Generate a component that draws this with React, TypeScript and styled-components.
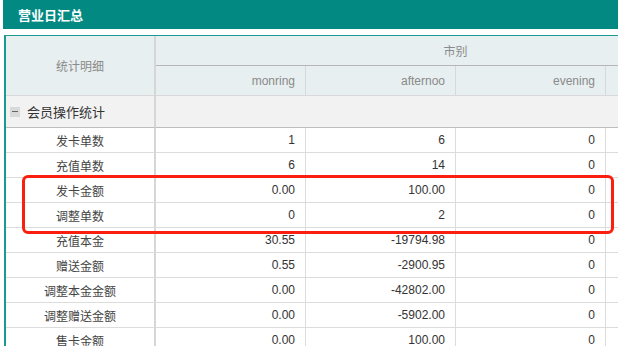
import React from "react";
import styled, { createGlobalStyle } from "styled-components";

const Global = createGlobalStyle`
  html, body { margin: 0; padding: 0; background: #fff; }
  body { font-family: "Liberation Sans", "Noto Sans CJK SC", sans-serif; overflow: hidden; }
`;

const Page = styled.div`
  position: relative;
  width: 618px;
  height: 346px;
  overflow: hidden;
  padding-left: 3px;
  box-sizing: border-box;
`;

const TitleBar = styled.div`
  height: 29px;
  background: #028a82;
  color: #fff;
  font-size: 13px;
  font-weight: bold;
  display: flex;
  align-items: center;
  padding-left: 15px;
`;

const TableWrap = styled.div`
  margin-top: 6px;
  margin-left: 1px;
  border-top: 1px solid #1a9a90;
  border-left: 2px solid #1a9a90;
  width: 760px;
`;

const Table = styled.table`
  border-collapse: separate;
  border-spacing: 0;
  table-layout: fixed;
  width: 750px;
  font-size: 12px;
`;

const HeadCell = styled.th<{ $align?: string; $h: number; $thick?: boolean; $dark?: boolean }>`
  background: #e7eff0;
  color: #8a8a8a;
  font-weight: normal;
  height: ${(p) => p.$h}px;
  padding: 0 10px;
  text-align: ${(p) => p.$align || "center"};
  border-right: ${(p) => (p.$thick ? "2px solid #d6d6d6" : "1px solid #d8d8d8")};
  border-bottom: 1px solid ${(p) => (p.$dark ? "#b5b5b5" : "#d8d8d8")};
  box-sizing: border-box;
`;

const GroupLabel = styled.td`
  background: #f2f2f2;
  height: 32px;
  padding: 0 0 0 4px;
  border-right: 2px solid #d6d6d6;
  border-bottom: 1px solid #bdbdbd;
  box-sizing: border-box;
  color: #333;
  font-size: 13px;
`;

const GroupFill = styled.td`
  background: #f2f2f2;
  border-bottom: 1px solid #bdbdbd;
`;

const GroupInner = styled.div`
  display: flex;
  align-items: center;
  gap: 7px;
`;

const Toggle = styled.span`
  width: 10px;
  height: 10px;
  background: #d9d9d9;
  display: inline-flex;
  align-items: center;
  justify-content: center;
  &::after {
    content: "";
    width: 6px;
    height: 1px;
    background: #666;
  }
`;

const LabelCell = styled.td`
  height: 25px;
  text-align: center;
  color: #444;
  border-right: 2px solid #d6d6d6;
  border-bottom: 1px solid #dcdcdc;
  box-sizing: border-box;
  padding: 0;
`;

const NumCell = styled.td`
  height: 25px;
  text-align: right;
  color: #333;
  padding: 0 10px;
  border-right: 1px solid #dcdcdc;
  border-bottom: 1px solid #dcdcdc;
  box-sizing: border-box;
`;

const Highlight = styled.div`
  position: absolute;
  left: 22px;
  top: 175px;
  width: 592px;
  height: 59px;
  border: 3px solid #fb1f10;
  border-radius: 6px;
  box-sizing: border-box;
  pointer-events: none;
`;

const rows: [string, string, string, string][] = [
  ["发卡单数", "1", "6", "0"],
  ["充值单数", "6", "14", "0"],
  ["发卡金额", "0.00", "100.00", "0"],
  ["调整单数", "0", "2", "0"],
  ["充值本金", "30.55", "-19794.98", "0"],
  ["赠送金额", "0.55", "-2900.95", "0"],
  ["调整本金金额", "0.00", "-42802.00", "0"],
  ["调整赠送金额", "0.00", "-5902.00", "0"],
  ["售卡金额", "0.00", "100.00", "0"],
];

export default function App() {
  return (
    <>
      <Global />
      <Page>
        <TitleBar>营业日汇总</TitleBar>
        <TableWrap>
          <Table>
            <colgroup>
              <col style={{ width: 150 }} />
              <col style={{ width: 150 }} />
              <col style={{ width: 150 }} />
              <col style={{ width: 150 }} />
              <col style={{ width: 150 }} />
            </colgroup>
            <thead>
              <tr>
                <HeadCell rowSpan={2} $h={60} $thick>
                  统计明细
                </HeadCell>
                <HeadCell colSpan={4} $h={30} $dark>
                  市别
                </HeadCell>
              </tr>
              <tr>
                <HeadCell $align="right" $h={30}>monring</HeadCell>
                <HeadCell $align="right" $h={30}>afternoo</HeadCell>
                <HeadCell $align="right" $h={30}>evening</HeadCell>
                <HeadCell $align="right" $h={30} />
              </tr>
            </thead>
            <tbody>
              <tr>
                <GroupLabel>
                  <GroupInner>
                    <Toggle />
                    会员操作统计
                  </GroupInner>
                </GroupLabel>
                <GroupFill colSpan={4} />
              </tr>
              {rows.map((r) => (
                <tr key={r[0]}>
                  <LabelCell>{r[0]}</LabelCell>
                  <NumCell>{r[1]}</NumCell>
                  <NumCell>{r[2]}</NumCell>
                  <NumCell>{r[3]}</NumCell>
                  <NumCell />
                </tr>
              ))}
            </tbody>
          </Table>
        </TableWrap>
        <Highlight />
      </Page>
    </>
  );
}
